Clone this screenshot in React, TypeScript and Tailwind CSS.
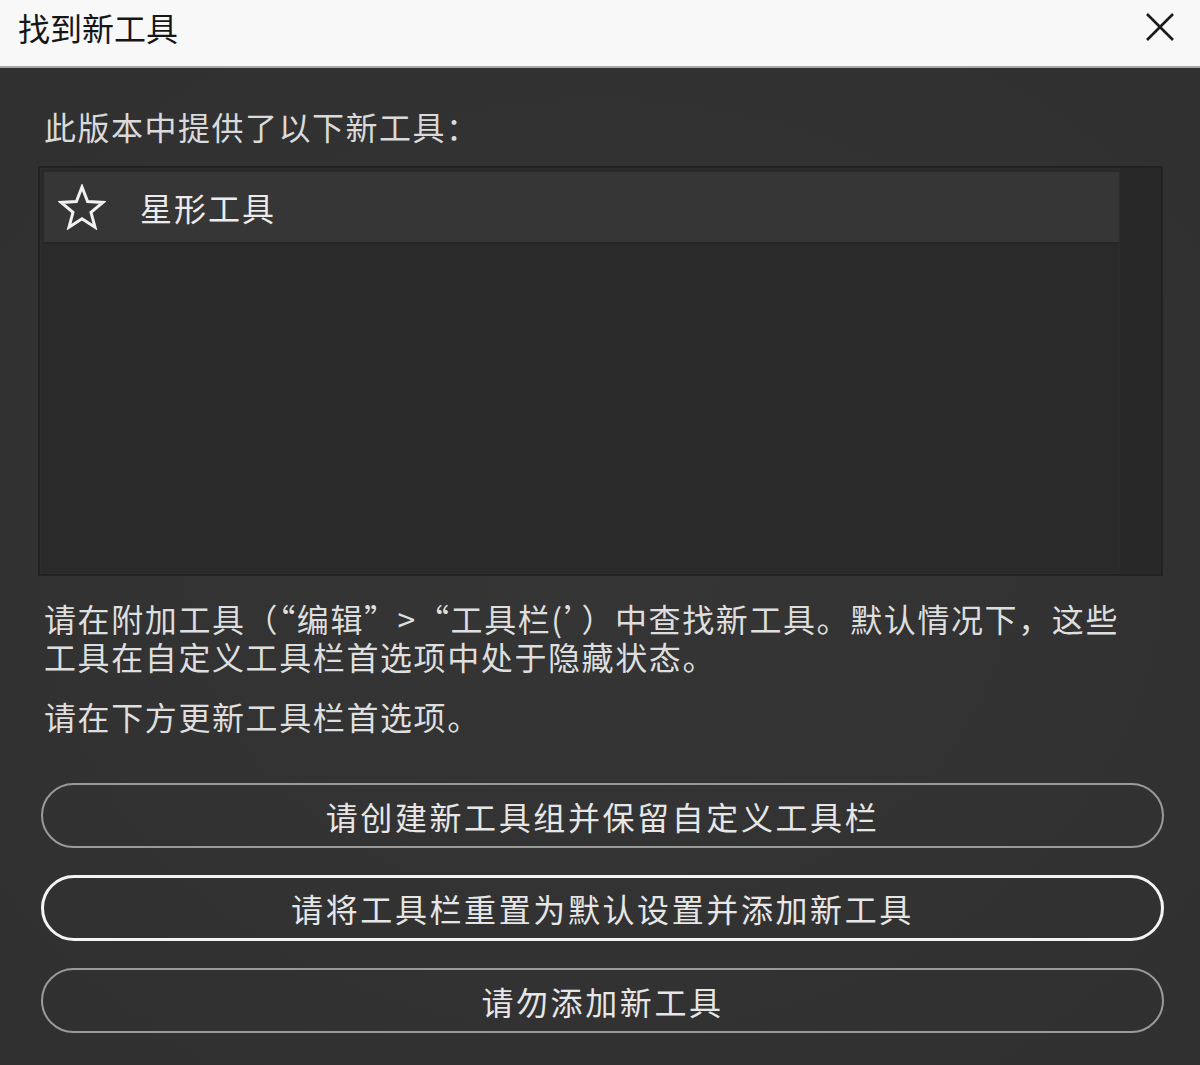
import React from "react";

const font = { fontFamily: '"Noto Sans CJK SC", "Noto Sans", sans-serif' };

function StarIcon() {
  return (
    <svg width="48" height="46" viewBox="0 0 48 46" fill="none">
      <path
        d="M24 3 L29.6 17.6 L45 18.4 L33 28.3 L37 43.2 L24 34.8 L11 43.2 L15 28.3 L3 18.4 L18.4 17.6 Z"
        stroke="#f2f2f2"
        strokeWidth="3"
        strokeLinejoin="miter"
      />
    </svg>
  );
}

function CloseIcon() {
  return (
    <svg width="32" height="32" viewBox="0 0 32 32" fill="none">
      <path d="M3 3 L29 29 M29 3 L3 29" stroke="#1a1a1a" strokeWidth="2.6" />
    </svg>
  );
}

function PillButton({ label, primary }: { label: string; primary?: boolean }) {
  return (
    <button
      className={
        primary
          ? "flex h-[66px] w-full items-center justify-center rounded-full border-[3px] border-[#f4f4f4] bg-transparent text-[32px] tracking-[2.6px] text-[#e6e6e6]"
          : "flex h-[65px] w-full items-center justify-center rounded-full border-2 border-[#9a9a9a] bg-transparent text-[32px] tracking-[2.6px] text-[#e6e6e6]"
      }
    >
      {label}
    </button>
  );
}

export default function App() {
  return (
    <div className="flex h-[1065px] w-[1200px] flex-col overflow-hidden bg-[#323232]" style={font}>
      {/* Title bar */}
      <div className="flex h-[68px] shrink-0 items-center justify-between border-b-2 border-[#a8a8a8] bg-[#f8f8f8] pb-[12px] pl-[18px] pr-[24px]">
        <span className="text-[32px] leading-none text-[#161616]">找到新工具</span>
        <CloseIcon />
      </div>

      <div className="flex flex-1 flex-col bg-[radial-gradient(ellipse_at_center,#353535_0%,#303030_100%)] px-[38px]">
        <p className="mt-[36px] pl-[6px] text-[32px] leading-[44px] tracking-[1.5px] text-[#dadada]">
          此版本中提供了以下新工具：
        </p>

        {/* List box */}
        <div className="mt-[18px] flex h-[410px] w-[1125px] border-2 border-[#222222] bg-[#2a2a2a] shadow-[inset_0_0_0_1px_#2e2e2e]">
          <div className="flex flex-1 flex-col pl-[4px] pt-[4px]">
            <div className="flex h-[72px] items-center border-b-2 border-[#262626] bg-[#363636]">
              <div className="ml-[14px] flex w-[48px] items-center justify-center">
                <StarIcon />
              </div>
              <span className="ml-[34px] text-[32px] tracking-[2px] text-[#ececec]">星形工具</span>
            </div>
          </div>
          <div className="w-[42px] border-l border-[#2c2c2c] bg-[#282828]" />
        </div>

        {/* Description */}
        <div className="mt-[23px] w-[1100px] pl-[6px] text-[32px] leading-[38px] tracking-[1.6px] text-[#dedede]">
          <p>
            请在附加工具（“编辑”&gt;“工具栏(’）中查找新工具。默认情况下，这些
            <br />
            工具在自定义工具栏首选项中处于隐藏状态。
          </p>
          <p className="mt-[22px]">请在下方更新工具栏首选项。</p>
        </div>

        {/* Buttons */}
        <div className="mt-[48px] flex w-[1126px] flex-col gap-[27px] pl-[3px]">
          <PillButton label="请创建新工具组并保留自定义工具栏" />
          <PillButton label="请将工具栏重置为默认设置并添加新工具" primary />
          <PillButton label="请勿添加新工具" />
        </div>
      </div>
    </div>
  );
}
